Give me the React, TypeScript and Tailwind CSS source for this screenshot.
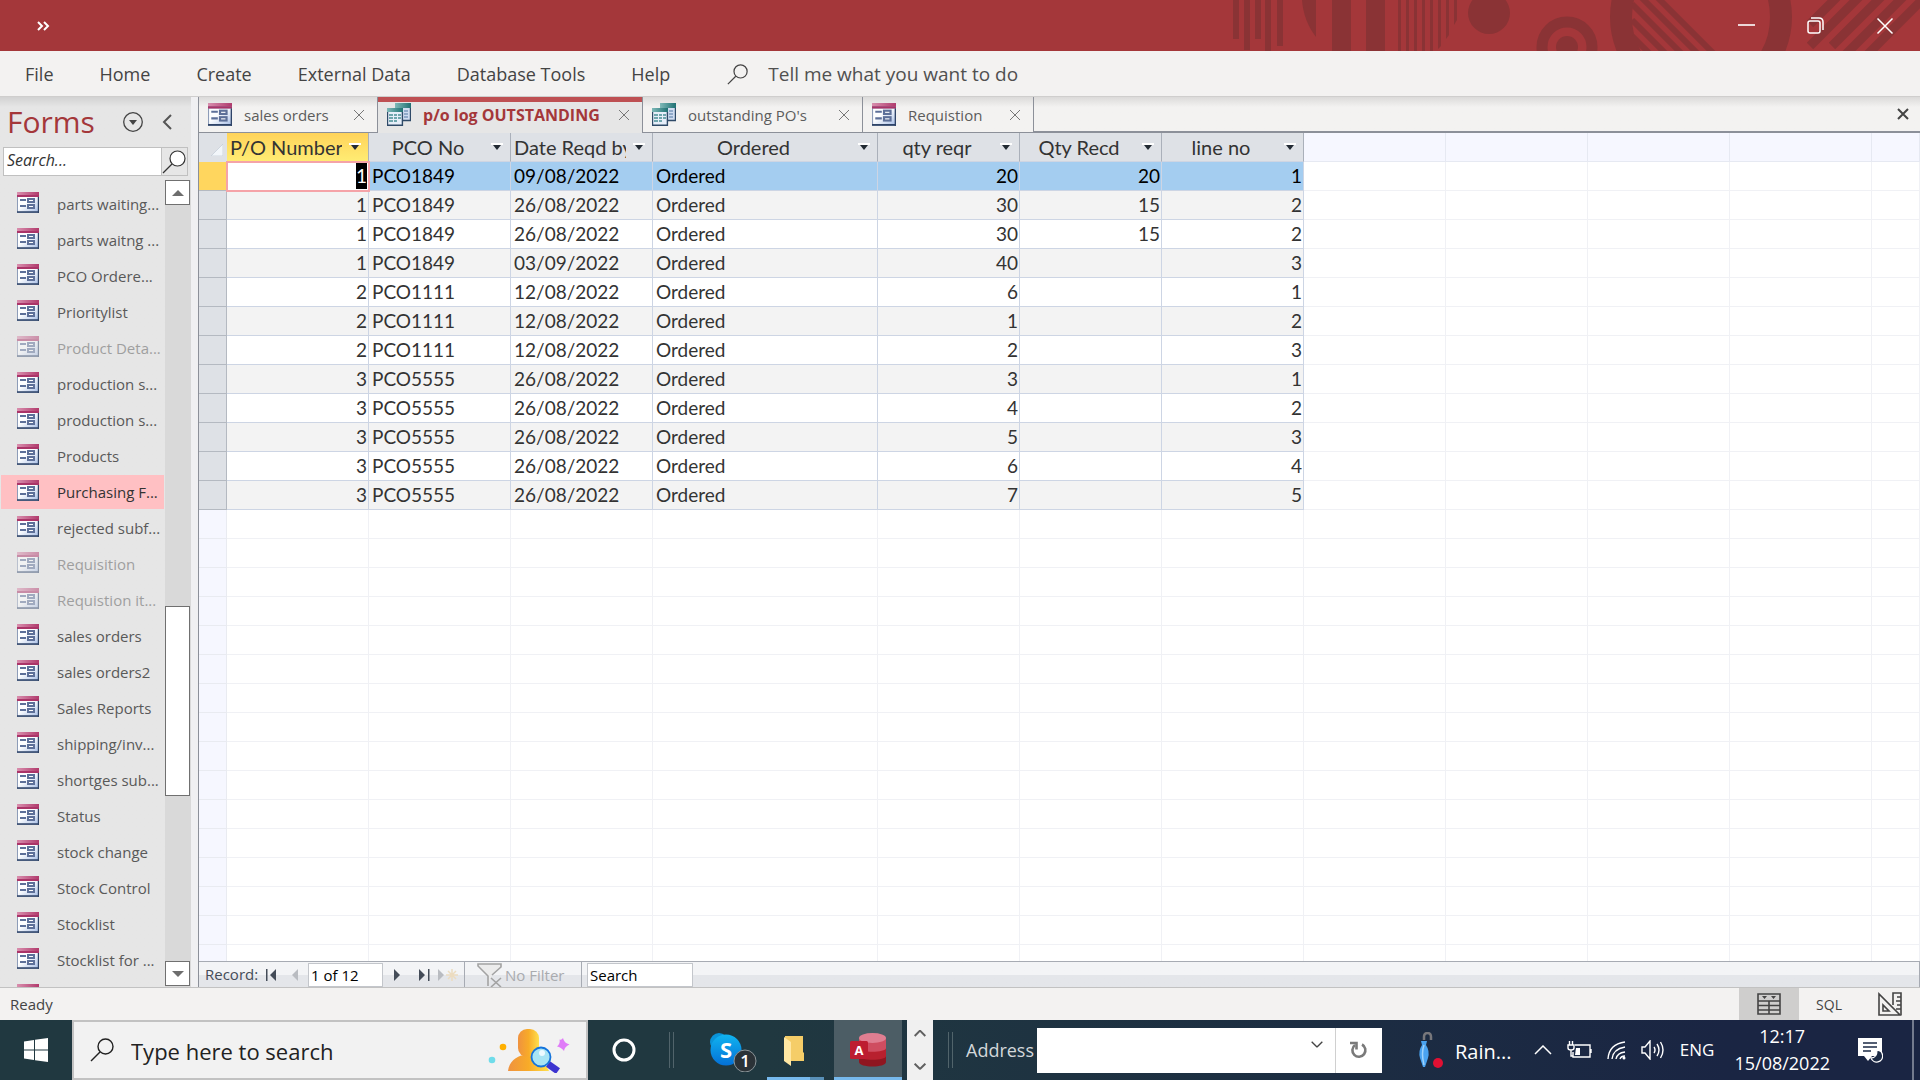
import clsx from "clsx";
import type { ReactNode } from "react";

const menuItems = ["File", "Home", "Create", "External Data", "Database Tools", "Help"];

const forms = [
  { name: "parts waiting..." },
  { name: "parts waitng ..." },
  { name: "PCO Ordere..." },
  { name: "Prioritylist" },
  { name: "Product Deta...", hidden: true },
  { name: "production s..." },
  { name: "production s..." },
  { name: "Products" },
  { name: "Purchasing F...", selected: true },
  { name: "rejected subf..." },
  { name: "Requisition", hidden: true },
  { name: "Requistion it...", hidden: true },
  { name: "sales orders" },
  { name: "sales orders2" },
  { name: "Sales Reports" },
  { name: "shipping/inv..." },
  { name: "shortges sub..." },
  { name: "Status" },
  { name: "stock change" },
  { name: "Stock Control" },
  { name: "Stocklist" },
  { name: "Stocklist for ..." },
  { name: "" },
];

const columns = [
  { title: "P/O Number", numeric: true },
  { title: "PCO No" },
  { title: "Date Reqd by" },
  { title: "Ordered" },
  { title: "qty reqr", numeric: true },
  { title: "Qty Recd", numeric: true },
  { title: "line no", numeric: true },
];

const rows = [
  ["1", "PCO1849", "09/08/2022", "Ordered", "20", "20", "1"],
  ["1", "PCO1849", "26/08/2022", "Ordered", "30", "15", "2"],
  ["1", "PCO1849", "26/08/2022", "Ordered", "30", "15", "2"],
  ["1", "PCO1849", "03/09/2022", "Ordered", "40", "", "3"],
  ["2", "PCO1111", "12/08/2022", "Ordered", "6", "", "1"],
  ["2", "PCO1111", "12/08/2022", "Ordered", "1", "", "2"],
  ["2", "PCO1111", "12/08/2022", "Ordered", "2", "", "3"],
  ["3", "PCO5555", "26/08/2022", "Ordered", "3", "", "1"],
  ["3", "PCO5555", "26/08/2022", "Ordered", "4", "", "2"],
  ["3", "PCO5555", "26/08/2022", "Ordered", "5", "", "3"],
  ["3", "PCO5555", "26/08/2022", "Ordered", "6", "", "4"],
  ["3", "PCO5555", "26/08/2022", "Ordered", "7", "", "5"],
];

const spareColumns = [0, 1, 2, 3, 4];
const spareRows = Array.from({ length: 16 }, (_, i) => i);

/* ---------- icons ---------- */

const FormIcon = ({ className }: { className?: string }) => (
  <svg viewBox="0 0 22 21" className={className} aria-hidden="true">
    <defs>
      <linearGradient id="formTop" x1="0" x2="1">
        <stop offset="0" stopColor="#d98fae" />
        <stop offset="1" stopColor="#b13a6c" />
      </linearGradient>
      <linearGradient id="formBody" x1="0" y1="0" x2="1" y2="1">
        <stop offset="0.4" stopColor="#fdfeff" />
        <stop offset="1" stopColor="#a9bfe6" />
      </linearGradient>
    </defs>
    <rect width="22" height="21" fill="#8d9cb8" />
    <rect x="1" y="5" width="20" height="15" fill="url(#formBody)" />
    <rect width="22" height="3" fill="url(#formTop)" />
    <rect y="3" width="22" height="2" fill="#ab3468" />
    <path d="M0 20h22M21.5 5v16" stroke="#2f4468" strokeWidth="1.4" />
    <path d="M3 8h6M3 14h6" stroke="#5d7099" strokeWidth="2" />
    <rect x="11" y="7" width="6" height="3" fill="#fff" stroke="#5d7099" strokeWidth="2" />
    <rect x="11" y="13" width="6" height="3" fill="#fff" stroke="#5d7099" strokeWidth="2" />
  </svg>
);

const QueryIcon = () => (
  <svg viewBox="0 0 24 23" className="w-6 h-[23px]" aria-hidden="true">
    <defs>
      <linearGradient id="queryTop" x1="0" x2="1">
        <stop offset="0" stopColor="#7fb9b8" />
        <stop offset="1" stopColor="#1f7173" />
      </linearGradient>
    </defs>
    <rect x="8" width="16" height="18" fill="#cfdcf0" />
    <rect x="8" width="16" height="5" fill="url(#queryTop)" />
    <path d="M17 8h4M17 11h4M17 14h4" stroke="#8fa9c9" strokeWidth="2" />
    <path d="M8 17.5h16M23.5 5v13" stroke="#2f4a68" strokeWidth="1.4" />
    <rect y="5" width="16" height="18" fill="#e6eef9" />
    <rect y="5" width="16" height="4" fill="url(#queryTop)" />
    <path d="M2 12h4M7 12h3M11 12h3M2 15h4M7 15h3M11 15h3M2 18h4M7 18h3" stroke="#6fa6ad" strokeWidth="2" />
    <path d="M0 22.300h16M15.400 9v14M0.500 9v13" stroke="#2f4a68" strokeWidth="1.4" />
  </svg>
);

const Magnifier = ({ className }: { className?: string }) => (
  <svg viewBox="0 0 24 24" fill="none" stroke="currentColor" className={className} aria-hidden="true">
    <circle cx="15.5" cy="8.5" r="7.5" />
    <path d="M10 14 1 23" />
  </svg>
);

const Cross = ({ className }: { className?: string }) => (
  <svg viewBox="0 0 12 12" fill="none" stroke="currentColor" className={className} aria-hidden="true">
    <path d="M1 1l10 10M11 1 1 11" />
  </svg>
);

const Chevron = ({ className }: { className?: string }) => (
  <svg viewBox="0 0 18 10" fill="none" stroke="currentColor" className={className} aria-hidden="true">
    <path d="M1 9l8-8 8 8" />
  </svg>
);

const TitleArt = () => (
  <svg viewBox="0 0 720 51" className="absolute right-0 top-0 h-[51px] w-[720px]" fill="#8a3335" aria-hidden="true">
    <path d="M33 0h6v39h-6zM44 0h6v50h-6zM55 0h6v39h-6zM65 0h6v51h-6zM77 0h6v46h-6z" />
    <path d="M102 0c1 14 6 27 14 37V0z" />
    <path d="M132 0h19v51h-19zM166 0h19v51h-19z" />
    <path d="M198 0h3v51h-3zM206 0h3v51h-3zM214 0h3v51h-3zM222 0h3v51h-3zM230 0h3v51h-3zM238 0h3v46l-3 3zM246 0h3v35l-3 4zM254 0h3v20l-3 5z" />
    <circle cx="289" cy="13" r="21" />
    <circle cx="367" cy="47" r="25" fill="none" stroke="#8a3335" strokeWidth="11" />
    <circle cx="367" cy="47" r="11" />
    <circle cx="501" cy="17" r="80" fill="none" stroke="#8a3335" strokeWidth="22" />
    <g stroke="#8a3335" strokeWidth="6">
      <path d="M456-4l60 60M440-4l60 60M432 4l52 52M432 20l36 36M432 36l20 20" />
    </g>
    <g stroke="#8a3335" strokeWidth="9">
      <path d="M640-6l-30 30M662-6l-52 52M684-6l-52 52M706-6l-62 62M728-6l-62 62" />
    </g>
  </svg>
);

/* ---------- window chrome ---------- */

const TitleBar = () => (
  <header className="relative h-[51px] shrink-0 bg-[#a4373a] text-white flex items-center justify-between">
    <TitleArt />
    <button aria-label="Customize toolbar" className="ml-9 h-6 w-4">
      <svg viewBox="0 0 14 12" className="w-[14px] h-3" fill="none" stroke="currentColor" strokeWidth="2">
        <path d="M2 2l4 4-4 4M8 2l4 4-4 4" />
      </svg>
    </button>
    <div className="relative flex items-center gap-[52px] mr-[26px]">
      <button aria-label="Minimize">
        <svg viewBox="0 0 17 17" className="w-[17px]" stroke="currentColor" strokeWidth="1.6">
          <path d="M0 8h17" />
        </svg>
      </button>
      <button aria-label="Restore">
        <svg viewBox="0 0 17 17" className="w-[17px]" fill="none" stroke="currentColor" strokeWidth="1.5">
          <rect x="1" y="4" width="12" height="12" rx="2" />
          <path d="M4 1h8q4 0 4 4v8" />
        </svg>
      </button>
      <button aria-label="Close">
        <Cross className="w-[18px] stroke-1" />
      </button>
    </div>
  </header>
);

const MenuBar = () => (
  <nav className="h-[46px] shrink-0 bg-[#f3f2f1] border-b border-[#cfcecd] flex items-center text-[18px] text-[#444444] pl-[2px] pt-[2px]">
    {menuItems.map((item) => (
      <button key={item} className="px-[23px]">
        {item}
      </button>
    ))}
    <label className="flex items-center ml-[34px] gap-5 grow">
      <Magnifier className="w-[21px] h-[21px] shrink-0 stroke-[1.4]" />
      <input
        aria-label="Tell me what you want to do"
        placeholder="Tell me what you want to do"
        className="w-80 bg-transparent text-[19px] outline-none placeholder:text-[#505050]"
      />
    </label>
  </nav>
);

/* ---------- navigation pane ---------- */

const Sidebar = () => (
  <aside className="w-[191px] shrink-0 bg-[#e6e6e6] bg-linear-to-b from-[#d2d2d2] to-[#e6e6e6] to-[10px] flex flex-col">
    <div className="h-[50px] flex items-center pl-[7px] text-[#a4373a]">
      <h1 className="text-[30px] leading-[50px] w-[116px]">Forms</h1>
      <button aria-label="Pane options" className="text-[#444444]">
        <svg viewBox="0 0 20 20" className="w-5" fill="none" stroke="currentColor">
          <circle cx="10" cy="10" r="9.3" strokeWidth="1.3" />
          <path d="M6 8h8l-4 5z" fill="currentColor" stroke="none" />
        </svg>
      </button>
      <button aria-label="Collapse pane" className="ml-[19px] text-[#555555]">
        <svg viewBox="0 0 10 16" className="w-[10px]" fill="none" stroke="currentColor" strokeWidth="2">
          <path d="M9 1 2 8l7 7" />
        </svg>
      </button>
    </div>
    <div className="ml-[3px] mr-[3px] h-[29px] shrink-0 flex border border-[#c0c0c0]">
      <input
        aria-label="Search forms"
        placeholder="Search..."
        className="min-w-0 grow bg-white pl-[3px] pb-1 text-[16px] italic outline-none placeholder:text-[#333333]"
      />
      <button aria-label="Search" className="w-[26px] shrink-0 border-l border-[#c0c0c0] text-[#333333]">
        <Magnifier className="w-6 h-6 stroke-[1.2] fill-white" />
      </button>
    </div>
    <div className="grow min-h-0 flex pt-1">
      <ul className="grow min-w-0 overflow-hidden pt-[7px] pl-px pr-px">
        {forms.map((form, i) => (
          <li key={i} className="h-9">
            <button
              className={clsx(
                "w-full h-[34px] flex items-center pl-4 text-[15px] text-left whitespace-nowrap",
                form.selected ? "bg-[#ffc0c3] text-[#333333]" : "text-[#595959]",
                form.hidden && "opacity-50"
              )}
            >
              <FormIcon className="w-[22px] h-[21px] mb-1 shrink-0" />
              <span className="ml-[18px] pt-px">{form.name}</span>
            </button>
          </li>
        ))}
      </ul>
      <div className="w-[26px] pr-px shrink-0 flex flex-col bg-[#d9d9d9]">
        <button aria-label="Scroll up" className="h-[25px] w-[25px] border border-[#707070] bg-white flex items-center justify-center">
          <svg viewBox="0 0 12 6" className="w-3" fill="#6d6d6d">
            <path d="M0 6h12L6 0z" />
          </svg>
        </button>
        <div className="grow-[403]" />
        <div className="grow-[188] w-[25px] bg-white border border-[#707070]" />
        <div className="grow-[166]" />
        <button aria-label="Scroll down" className="h-[25px] w-[25px] mb-px border border-[#707070] bg-white flex items-center justify-center">
          <svg viewBox="0 0 12 6" className="w-3" fill="#6d6d6d">
            <path d="M0 0h12L6 6z" />
          </svg>
        </button>
      </div>
    </div>
  </aside>
);

/* ---------- document tabs ---------- */

const Tab = ({ title, icon, active, className }: { title: string; icon: ReactNode; active?: boolean; className: string }) => (
  <div
    className={clsx(
      "flex items-center pl-[9px] pr-3",
      active
        ? "bg-[#e6e6e6] border-t-[5px] border-[#be5053] text-[16px] text-[#a4373a] font-bold pb-[6px]"
        : "border-r border-b border-[#8c9099] text-[15px] text-[#5c5c5c]",
      className
    )}
  >
    <button className="grow flex items-center gap-3 text-left whitespace-nowrap">
      {icon}
      <span className="pt-px">{title}</span>
    </button>
    <button aria-label={"Close " + title} className="text-[#777777]">
      <Cross className="w-3" />
    </button>
  </div>
);

const TabStrip = () => (
  <div className="h-9 shrink-0 flex bg-[#f3f2f1] bg-linear-to-b from-[#dbdad9] to-[#f3f2f1] to-[10px]">
    <Tab title="sales orders" icon={<FormIcon className="w-6 h-[23px]" />} className="w-[179px]" />
    <Tab title="p/o log OUTSTANDING" icon={<QueryIcon />} active className="w-[264px]" />
    <Tab title="outstanding PO's" icon={<QueryIcon />} className="w-[221px] border-l" />
    <Tab title="Requistion" icon={<FormIcon className="w-6 h-[23px]" />} className="w-[171px]" />
    <div className="grow border-b-2 border-[#8c9099] flex items-center justify-end pr-[11px]">
      <button aria-label="Close document" className="text-[#444444]">
        <Cross className="w-3 stroke-2" />
      </button>
    </div>
  </div>
);

/* ---------- datasheet ---------- */

const Datasheet = () => (
  <div className="grow min-h-0 overflow-hidden bg-white">
    <table className="w-full table-fixed border-separate border-spacing-0 font-['Lato','Liberation_Sans',sans-serif] text-[19px] leading-[28px] text-[#333333]">
      <colgroup>
        <col className="w-7" />
        <col className="w-[142px]" />
        <col className="w-[142px]" />
        <col className="w-[142px]" />
        <col className="w-[225px]" />
        <col className="w-[142px]" />
        <col className="w-[142px]" />
        <col className="w-[142px]" />
        <col className="w-[142px]" />
        <col className="w-[142px]" />
        <col className="w-[142px]" />
        <col className="w-[142px]" />
        <col />
      </colgroup>
      <thead>
        <tr className="h-[29px]">
          <th className="p-0 bg-[#dee1e6]">
            <svg viewBox="0 0 12 12" className="w-3 ml-3 mt-1">
              <path d="M12 0v12H0z" fill="#f2f6fa" stroke="#c3cbd6" strokeWidth="0.7" />
            </svg>
          </th>
          {columns.map((col, i) => (
            <th
              key={col.title}
              className={clsx(
                "p-0 font-normal text-[20px] border-r border-b border-r-[#aab0ba] border-b-[#cfd5e2]",
                i === 0 ? "bg-linear-to-b from-[#ffd35a] to-[#ffec73]" : "bg-[#dee1e6]"
              )}
            >
              <div className="flex items-center h-7 pl-[3px]">
                <span className="grow min-w-0 overflow-hidden whitespace-nowrap text-center">{col.title}</span>
                <button aria-label={"Filter " + col.title} className="w-[26px] shrink-0 flex justify-center">
                  <svg viewBox="0 0 12 8" className="w-3 h-2">
                    <path d="M0 1h12" stroke="#fff" strokeWidth="2" />
                    <path d="M2 2h8L6 7z" fill="#222a33" />
                  </svg>
                </button>
              </div>
            </th>
          ))}
          {spareColumns.map((c) => (
            <th key={c} className="p-0 bg-[#f6f7ff] border-r border-b border-[#e6e9f2]" />
          ))}
        </tr>
      </thead>
      <tbody>
        {rows.map((row, r) => (
          <tr key={r} className={clsx("h-[29px]", r === 0 ? "bg-[#a4cdf0] text-black" : r % 2 ? "bg-[#f3f3f3]" : "bg-white")}>
            <td className={clsx("p-0 border-r border-b border-[#b4b9c1]", r === 0 ? "bg-[#ffd65e]" : "bg-[#dee1e6]")} />
            {row.map((value, c) => (
              <td
                key={c}
                className={clsx(
                  "py-0 border-r border-b border-[#cdd5e4]",
                  columns[c].numeric ? "text-right pr-px" : "pl-[3px]",
                  r === 0 && c === 0 && "bg-white outline-2 -outline-offset-1 outline-[#f5a3a8]"
                )}
              >
                {r === 0 && c === 0 ? <span className="block w-[11px] ml-auto h-[26px] leading-[26px] bg-black text-white">{value}</span> : value}
              </td>
            ))}
            {spareColumns.map((c) => (
              <td key={c} className="p-0 bg-white border-r border-b border-[#f0f1f5]" />
            ))}
          </tr>
        ))}
        {spareRows.map((r) => (
          <tr key={r} className="h-[29px]">
            <td className="p-0 bg-[#f6f7ff] border-r border-b border-[#e9ebf1]" />
            {columns.map((col) => (
              <td key={col.title} className="p-0 border-r border-b border-[#f0f1f5]" />
            ))}
            {spareColumns.map((c) => (
              <td key={c} className="p-0 border-r border-b border-[#f0f1f5]" />
            ))}
          </tr>
        ))}
      </tbody>
    </table>
  </div>
);

const NavButton = ({ label, children, className }: { label: string; children: ReactNode; className?: string }) => (
  <button aria-label={label} className={clsx("h-5 w-6 shrink-0 flex items-center justify-center", className)}>
    <svg viewBox="0 0 20 14" className="w-5 h-[14px]" fill="currentColor">
      {children}
    </svg>
  </button>
);

const RecordBar = () => (
  <div className="h-[26px] shrink-0 flex items-center border-t border-r border-[#a7abb3] bg-linear-to-b from-[#f3f4f6] from-50% to-[#e4e6ea] to-50% text-[15px] text-[#444c58]">
    <label htmlFor="record" className="pl-[6px] w-[61px] shrink-0">
      Record:
    </label>
    <NavButton label="First record">
      <path d="M4 1h1.5v12H4zM14 1v12L8 7z" />
    </NavButton>
    <NavButton label="Previous record" className="text-[#b9bcc1]">
      <path d="M12 1v12L6 7z" />
    </NavButton>
    <input
      id="record"
      defaultValue="1 of 12"
      className="w-[75px] h-6 bg-white border border-[#c3c6cb] pl-[2px] text-black outline-none"
    />
    <NavButton label="Next record" className="ml-[5px]">
      <path d="M4 1v12l6-6z" />
    </NavButton>
    <NavButton label="Last record">
      <path d="M5 1v12l6-6zM14 1h1.5v12H14z" />
    </NavButton>
    <NavButton label="New record" className="text-[#b9bcc1]">
      <path d="M0 1v12l6-6z" />
      <path d="M14 1v12M8 7h12M10 3l8 8M18 3l-8 8" stroke="#ecdcc0" strokeWidth="1.5" />
    </NavButton>
    <button className="ml-1 h-full w-[118px] border-x border-[#a7abb3] flex items-center pl-3 text-[#a9abaf] whitespace-nowrap">
      <svg viewBox="0 0 26 24" className="w-[26px] h-6 mr-[2px] shrink-0" fill="none" stroke="#a3a3a3" strokeWidth="1.6">
        <path d="M11 23V13L1 3V1h23v3l-9 8" fill="#ececec" />
        <path d="M14 15l10 9M24 15l-10 9" />
      </svg>
      <span className="pt-px">No Filter</span>
    </button>
    <input
      aria-label="Search records"
      placeholder="Search"
      className="ml-[5px] w-[106px] h-6 bg-white border border-[#c3c6cb] pl-[2px] outline-none placeholder:text-black"
    />
  </div>
);

const StatusBar = () => (
  <footer className="h-[33px] shrink-0 bg-[#f3f2f1] border-t border-[#c2c2c2] flex items-center pl-[10px] text-[15px] text-[#444444]">
    <span className="grow">Ready</span>
    <button aria-label="Datasheet view" className="w-[60px] h-full bg-[#cfcecd] flex items-center justify-center">
      <svg viewBox="0 0 24 22" className="w-6" fill="none" stroke="#444444" strokeWidth="1.6">
        <path d="M1 1h22v20H1zM1 8h22M1 12.5h22M1 17h22M12 8v13" />
        <path d="M5 3h5L7.500 6zM14 3h5l-2.500 3z" fill="#444444" stroke="none" />
      </svg>
    </button>
    <button className="w-[60px] text-[14px]">SQL</button>
    <button aria-label="Design view" className="w-[61px] flex justify-center">
      <svg viewBox="0 0 24 24" className="w-6" fill="none" stroke="#444444" strokeWidth="1.6">
        <path d="M1 2v21h21zM5 13v6h6z" />
        <path d="M15 13V1h8v22M19 5h4M18 9h5M19 13h4M18 17h5" />
      </svg>
    </button>
  </footer>
);

/* ---------- taskbar ---------- */

const Grip = ({ className }: { className?: string }) => (
  <div className={clsx("w-[5px] h-9 shrink-0 border-x border-[#51646b]", className)} />
);

const SearchHighlight = () => (
  <svg viewBox="0 0 84 46" className="w-[84px] h-[46px] shrink-0" aria-hidden="true">
    <defs>
      <linearGradient id="person" x1="0" x2="1">
        <stop offset="0" stopColor="#ef9240" />
        <stop offset="0.5" stopColor="#f8ab28" />
        <stop offset="1" stopColor="#ffdf4d" />
      </linearGradient>
    </defs>
    <circle cx="5" cy="33" r="3.300" fill="#6fdcea" />
    <circle cx="16" cy="20" r="3.300" fill="#ffb000" />
    <path d="M21 44c1-9 8-15 16-16h9c7 2 12 8 16 16z" fill="url(#person)" />
    <rect x="31" y="2" width="21" height="28" rx="9" fill="url(#person)" />
    <path d="M61 37l10 7" stroke="#3d34d0" strokeWidth="7" />
    <circle cx="54" cy="30" r="9.500" fill="#a8e4f4" stroke="#1474dc" strokeWidth="1.800" />
    <circle cx="55" cy="26" r="3" fill="#ecfaff" />
    <path d="M76 11q1 5 6.500 6.500-5 2-5.500 6.500-3-4-7-4.500 3.500-3 2.500-7 2 1 3.500-1.500z" fill="#e07cf8" />
  </svg>
);

const Taskbar = () => (
  <div className="h-[60px] shrink-0 bg-linear-to-r from-[#203840] from-40% to-[#1a2543] to-90% flex items-center text-white">
    <button aria-label="Start" className="w-[72px] h-full shrink-0 flex items-center justify-center">
      <svg viewBox="0 0 24 24" className="w-6" fill="#fff">
        <path d="M0 3.500 10 2v9.500H0zM11 1.800 24 0v11.500H11zM0 12.500h10V22L0 20.500zM11 12.500h13V24l-13-1.800z" />
      </svg>
    </button>
    <label className="w-[516px] h-full shrink-0 bg-[#f2f2f2] border-2 border-[#c2c2c2] flex items-center pl-4 pr-[15px] text-[#222222]">
      <Magnifier className="w-6 h-6 shrink-0 stroke-[1.4]" />
      <input
        aria-label="Type here to search"
        placeholder="Type here to search"
        className="grow min-w-0 ml-[17px] pt-[3px] text-[22px] outline-none placeholder:text-[#222222]"
      />
      <SearchHighlight />
    </label>
    <button aria-label="Cortana" className="w-[72px] h-full shrink-0 flex items-center justify-center">
      <svg viewBox="0 0 24 24" className="w-6" fill="none" stroke="#fff" strokeWidth="3">
        <circle cx="12" cy="12" r="10" />
      </svg>
    </button>
    <Grip className="ml-[9px]" />
    <button aria-label="Skype, 1 notification" className="ml-9 w-12 h-full shrink-0 flex items-center">
      <svg viewBox="0 0 48 44" className="w-12 h-11 shrink-0">
        <defs>
          <linearGradient id="skype" x1="0" y1="0" x2="0" y2="1">
            <stop offset="0" stopColor="#10b4f0" />
            <stop offset="1" stopColor="#0470d6" />
          </linearGradient>
        </defs>
        <circle cx="9" cy="14" r="9" fill="#0a93d8" />
        <circle cx="16" cy="22" r="15.500" fill="url(#skype)" />
        <text x="16" y="30" textAnchor="middle" fontSize="22" fontWeight="700" fill="#fff">
          S
        </text>
        <circle cx="35" cy="33" r="11" fill="#2b3237" stroke="#8c9599" />
        <text x="35" y="39" textAnchor="middle" fontSize="17" fontWeight="600" fill="#fff">
          1
        </text>
      </svg>
    </button>
    <button aria-label="File Explorer" className="ml-[9px] w-[57px] h-full shrink-0 flex flex-col justify-end">
      <svg viewBox="0 0 20 30" className="w-5 h-[30px] ml-[17px] mb-[11px]">
        <path d="M1 0h18v16l1 1v8H1z" fill="#f5cd68" />
        <path d="M0 1l7 5v24l-7-5z" fill="#ffe7a3" />
      </svg>
      <span className="flex h-[3px] w-full">
        <span className="w-[43px] bg-[#76b9ed]" />
        <span className="grow bg-[#5990b8]" />
      </span>
    </button>
    <button aria-label="Access" className="ml-[10px] w-[68px] h-full shrink-0 flex items-center justify-center bg-[#4c5d65] border-b-[3px] border-[#76b9ed]">
      <svg viewBox="0 0 36 34" className="w-9 h-[34px] mt-[3px]">
        <path d="M9 5v24c0 6 27 6 27 0V5z" fill="#8f1620" />
        <path d="M9 5v18c0 5 27 5 27 0V5z" fill="#b8202e" />
        <path d="M9 5v10c0 5 27 5 27 0V5z" fill="#cf4d60" />
        <ellipse cx="22.500" cy="5" rx="13.500" ry="5" fill="#e07e91" />
        <rect x="0" y="8" width="18" height="18" rx="1.500" fill="#bd1d30" />
        <text x="9" y="22" textAnchor="middle" fontSize="13" fontWeight="700" fill="#fff">
          A
        </text>
      </svg>
    </button>
    <div className="ml-[5px] w-[26px] h-full shrink-0 bg-[#f0f0f0] flex flex-col items-center justify-between py-[10px] text-[#606060]">
      <button aria-label="Scroll apps up">
        <Chevron className="w-3 stroke-[3]" />
      </button>
      <button aria-label="Scroll apps down">
        <Chevron className="w-3 stroke-[3] rotate-180" />
      </button>
    </div>
    <Grip className="ml-[15px]" />
    <label htmlFor="address" className="ml-[13px] w-[71px] shrink-0 pt-px text-[18px] text-[#d3d8da]">
      Address
    </label>
    <div className="w-[345px] h-[45px] shrink-0 bg-white text-[#444444] flex items-stretch">
      <input id="address" className="grow min-w-0 outline-none" />
      <button aria-label="Address history" className="w-9 pb-3 flex items-center justify-center">
        <Chevron className="w-3 rotate-180 stroke-2" />
      </button>
      <button aria-label="Refresh" className="w-[47px] border-l border-[#d0d0d0] flex items-center justify-center">
        <svg viewBox="0 0 18 18" className="w-[18px]" fill="none" stroke="#7a7a7a" strokeWidth="2.600">
          <path d="M12 3.500a6.500 6.500 0 1 1-7 .5" />
          <path d="M0 2h6.500v6.500" />
        </svg>
      </button>
    </div>
    <button className="ml-9 shrink-0 flex items-center text-[20px]">
      <svg viewBox="0 0 28 36" className="w-7 h-9 mr-[9px]">
        <path d="M6 8V5q0-4 3.500-4T13 5v3" fill="none" stroke="#77777b" strokeWidth="2.500" />
        <path d="M3 9h6l-1 4q4 6 2 13l-3 9H5l-3-9q-2-7 2-13z" fill="#4aa3f0" />
        <path d="M6 13q-3 8 0 20" stroke="#9fd3fb" strokeWidth="1.500" fill="none" />
        <circle cx="20" cy="31" r="5" fill="#e01033" />
      </svg>
      <span className="pt-[3px]">Rain...</span>
    </button>
    <div className="grow" />
    <div className="shrink-0 flex items-center gap-[15px] mr-5">
      <button aria-label="Show hidden icons">
        <Chevron className="w-[18px] stroke-[1.5]" />
      </button>
      <svg viewBox="0 0 25 18" className="w-[25px]" fill="none" stroke="#fff" strokeWidth="1.400" aria-label="Battery charging">
        <path d="M8 4h15v12H6v-5M24 8v4" />
        <path d="M9 7h4v7H8z" fill="#fff" stroke="none" />
        <path d="M1 4h6v3q0 2-3 2T1 7zM2.500 4V0M5.500 4V0M4 9v6h2" />
      </svg>
      <svg viewBox="0 0 19 19" className="w-[19px]" fill="none" stroke="#fff" strokeWidth="1.400" aria-label="Wi-Fi">
        <path d="M1 18Q2 3 18 1M5 18Q6 8 18 6M9 18q1-6 9-7M13 18q1-3 5-3" />
        <circle cx="17" cy="17" r="1.500" fill="#fff" stroke="none" />
      </svg>
      <svg viewBox="0 0 24 20" className="w-6" fill="none" stroke="#fff" strokeWidth="1.400" aria-label="Volume">
        <path d="M1 7h3l5-6v18l-5-6H1zM13 7q2 3 0 6M16 4q4 6 0 12M19.500 2q5 8 0 16" />
      </svg>
      <button className="text-[17px]">ENG</button>
    </div>
    <button className="shrink-0 flex flex-col items-center text-[18px] leading-[27px]">
      <span>12:17</span>
      <span>15/08/2022</span>
    </button>
    <button aria-label="Notifications" className="ml-7 mr-[29px] shrink-0">
      <svg viewBox="0 0 25 25" className="w-[25px]">
        <path d="M0 0h24v18H14l-4 5-4-5H0z" fill="#fff" />
        <path d="M5 5h14M5 9h14M5 13h8" stroke="#1b2a45" strokeWidth="1.500" />
        <path d="M19 12a6 6 0 1 1-6 8q6 0 6-8z" fill="#1b2a45" stroke="#fff" strokeWidth="1.300" />
      </svg>
    </button>
    <button aria-label="Show desktop" className="w-2 h-full shrink-0 border-l-2 border-[#737b8e]" />
  </div>
);

const App = () => {
  return (
    <div className="h-screen overflow-hidden flex flex-col font-['Open_Sans','Noto_Sans',sans-serif]">
      <TitleBar />
      <MenuBar />
      <div className="grow min-h-0 flex bg-[#f0f0f2]">
        <Sidebar />
        <main className="grow min-w-0 ml-[7px] border-l border-[#8c9099] flex flex-col">
          <TabStrip />
          <Datasheet />
          <RecordBar />
        </main>
      </div>
      <StatusBar />
      <Taskbar />
    </div>
  );
};

export default App;
